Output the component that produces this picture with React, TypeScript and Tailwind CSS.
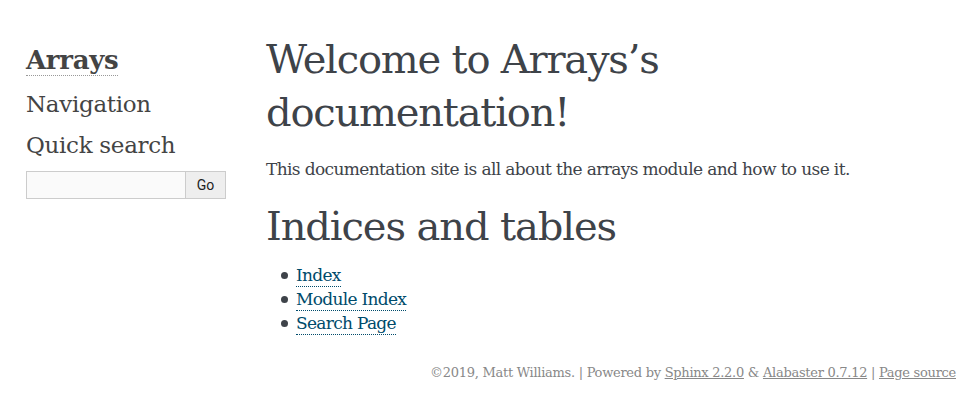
export default function App() {
  const links = ["Index", "Module Index", "Search Page"];
  return (
    <div className="min-h-screen bg-white text-[#3e4349] font-['DejaVu_Serif',serif]">
      <div className="flex pt-[33px] pl-[26px]">
        <aside className="w-[200px] shrink-0 pt-[7px] tracking-[-0.3px]">
          <h1 className="text-[26px] leading-[40px] font-bold text-[#444]">
            <a href="#" className="border-b border-dotted border-[#999]">Arrays</a>
          </h1>
          <h3 className="mt-[5px] text-[23px] leading-[38px] text-[#444]">Navigation</h3>
          <h3 className="mt-[3px] text-[23px] leading-[38px] text-[#444]">Quick search</h3>
          <form className="mt-[7px] flex">
            <input className="h-[28px] w-[160px] border border-[#ccc] bg-[#fafafa] outline-none" />
            <button type="button" className="h-[28px] w-[40px] border border-l-0 border-[#ccc] bg-[#eee] font-['Roboto',sans-serif] text-[14px] tracking-normal text-[#222]">
              Go
            </button>
          </form>
        </aside>
        <main className="ml-[40px] flex-1">
          <h1 className="text-[40px] leading-[53px] font-normal tracking-[-1.2px]">
            Welcome to Arrays’s
            <br />
            documentation!
          </h1>
          <p className="mt-[17px] text-[17px] leading-[26px] tracking-[-0.63px]">
            This documentation site is all about the arrays module and how to use it.
          </p>
          <h2 className="mt-[18px] text-[40px] leading-[53px] font-normal tracking-[-1.1px]">Indices and tables</h2>
          <ul className="mt-[10px] pl-[15px] text-[17px] leading-[24px] tracking-[-0.7px]">
            {links.map((l) => (
              <li key={l} className="flex h-[24px] items-center gap-[8px]">
                <span className="h-[7px] w-[7px] shrink-0 rounded-full bg-[#3e4349]" />
                <a href="#" className="text-[#004b6b] border-b border-dotted border-[#004b6b] leading-[22px]">{l}</a>
              </li>
            ))}
          </ul>
        </main>
      </div>
      <footer className="mt-[28px] pr-[16px] text-right text-[13px] leading-[20px] tracking-[-0.28px] text-[#888]">
        ©2019, Matt Williams. | Powered by <a href="#" className="underline">Sphinx 2.2.0</a> &amp;{" "}
        <a href="#" className="underline">Alabaster 0.7.12</a> | <a href="#" className="underline">Page source</a>
      </footer>
    </div>
  );
}
